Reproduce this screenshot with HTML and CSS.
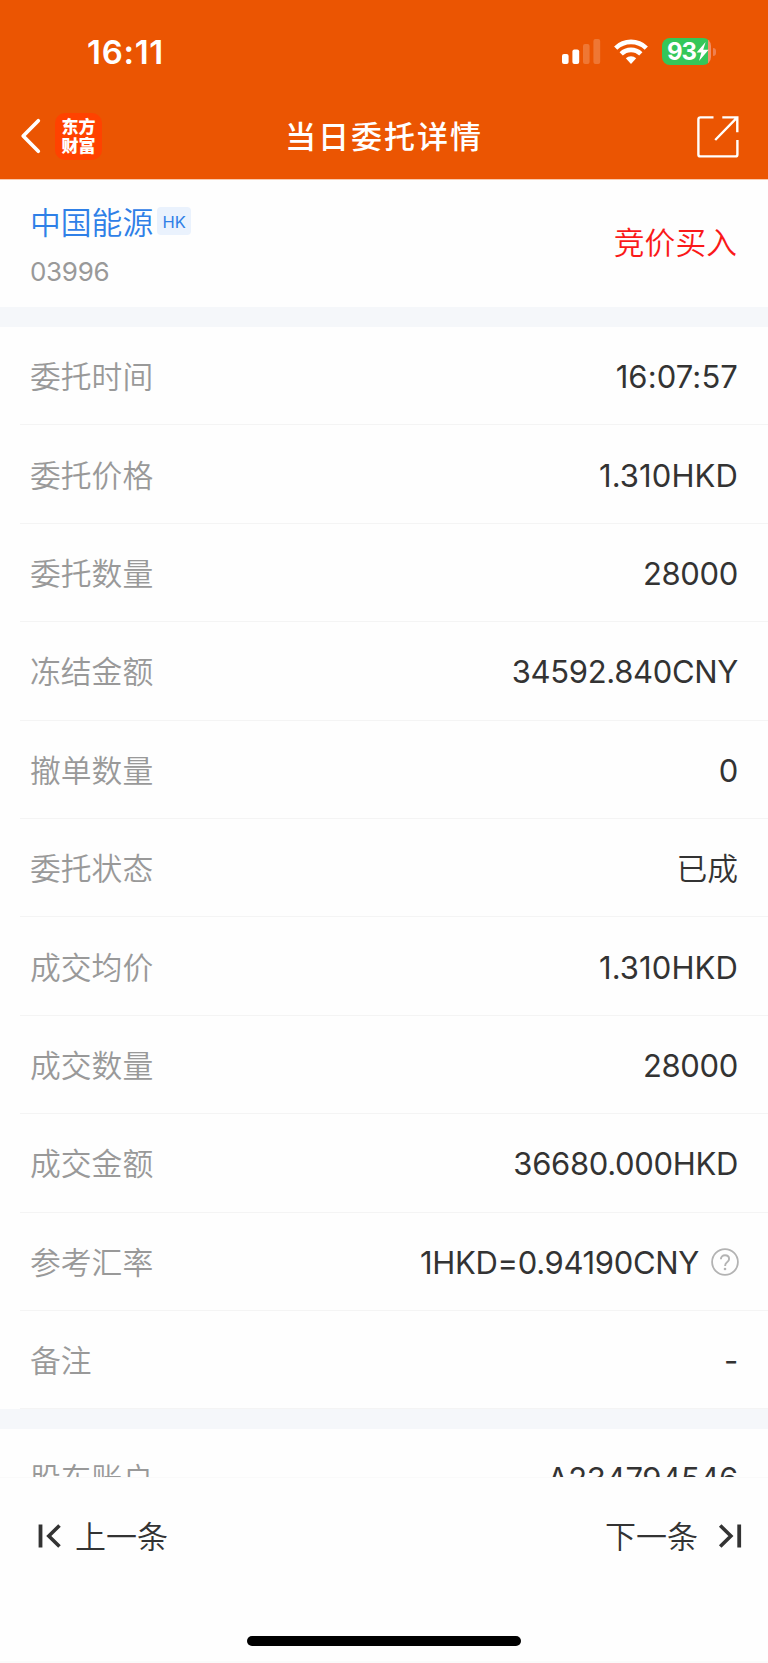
FILE: index.html
```html
<!DOCTYPE html>
<html lang="zh-CN">
<head>
<meta charset="utf-8">
<title>当日委托详情</title>
<link rel="stylesheet" href="styles.css">
</head>
<body>
<div class="screen">
  <header class="header">
    <div class="status">
      <span class="clock">16:11</span>
      <div class="indicators">
        <svg class="signal" width="40" height="26" viewBox="0 0 40 26" fill="#fff">
          <rect x="1" y="15" width="6.6" height="10" rx="2"/>
          <rect x="11.4" y="10.4" width="6.8" height="14.6" rx="2"/>
          <rect x="22" y="5" width="6.6" height="20" rx="2" opacity=".2"/>
          <rect x="32.4" y="0" width="6.8" height="25" rx="2" opacity=".2"/>
        </svg>
        <svg class="wifi" width="34" height="26" viewBox="0 0 34 26">
          <g fill="none" stroke="#fff" stroke-width="4.6">
            <path d="M1.7 9.1a22 22 0 0 1 30.6 0"/>
            <path d="M7.2 14.9a14 14 0 0 1 19.6 0"/>
          </g>
          <path d="M11.8 19.3a7.6 7.6 0 0 1 10.4 0L17 25z" fill="#fff"/>
        </svg>
        <div class="battery">
          <span class="battery-level">93</span>
          <svg class="bolt" width="13" height="19" viewBox="0 0 13 19"><path d="M9.6 0 .6 10.6h4.8L3 19l9.6-11.2H7.2z" fill="#fff"/></svg>
        </div>
        <span class="battery-tip"></span>
      </div>
    </div>
    <nav class="nav">
      <div class="nav-left">
        <svg width="22" height="36" viewBox="0 0 22 36"><path d="M19.3 2.8 4.2 18l15.1 15.2" fill="none" stroke="#fff" stroke-width="3.7" stroke-linecap="round" stroke-linejoin="round"/></svg>
        <div class="logo"><span>东方</span><span>财富</span></div>
      </div>
      <h1 class="title">当日委托详情</h1>
      <svg class="share" width="42" height="42" viewBox="0 0 42 42" fill="none" stroke="#fff" stroke-width="2.4">
        <path d="M16.5 1.4H3.4Q1.4 1.4 1.4 3.4V38.4Q1.4 40.4 3.4 40.4H38.4Q40.4 40.4 40.4 38.4V24M25.3 1.4H40.3V16.2M40 1.7 18.2 24"/>
      </svg>
    </nav>
  </header>

  <main class="content">
    <section class="stock">
      <div>
        <div class="stock-name">中国能源<span class="tag">HK</span></div>
        <div class="code">03996</div>
      </div>
      <span class="side">竞价买入</span>
    </section>
    <section class="rows">
      <div class="row"><span class="label">委托时间</span><span class="value loose">16:07:57</span></div>
      <div class="row"><span class="label">委托价格</span><span class="value loose">1.310HKD</span></div>
      <div class="row"><span class="label">委托数量</span><span class="value">28000</span></div>
      <div class="row"><span class="label">冻结金额</span><span class="value">34592.840CNY</span></div>
      <div class="row"><span class="label">撤单数量</span><span class="value">0</span></div>
      <div class="row"><span class="label">委托状态</span><span class="value zh">已成</span></div>
      <div class="row"><span class="label">成交均价</span><span class="value loose">1.310HKD</span></div>
      <div class="row"><span class="label">成交数量</span><span class="value">28000</span></div>
      <div class="row"><span class="label">成交金额</span><span class="value">36680.000HKD</span></div>
      <div class="row"><span class="label">参考汇率</span><span class="value">1HKD=0.94190CNY</span>
        <svg class="help" width="28" height="28" viewBox="0 0 28 28" fill="none" stroke="#b3b3b3"><circle cx="14" cy="14" r="12.9" stroke-width="1.8"/><path d="M9.9 11.3c0-2.5 1.7-4 4.1-4s4.1 1.5 4.1 3.7c0 1.7-1 2.5-2.1 3.3-1.3.9-1.9 1.6-1.9 3.6" stroke-width="1.9"/><circle cx="14" cy="21" r="1.3" fill="#b3b3b3" stroke="none"/></svg>
      </div>
      <div class="row"><span class="label">备注</span><span class="value">-</span></div>
    </section>
    <section class="rows">
      <div class="row"><span class="label">股东账户</span><span class="value">A234794546</span></div>
    </section>
  </main>

  <footer class="footer">
    <div class="pager">
      <div class="pager-link">
        <svg width="24" height="24" viewBox="0 0 24 24" fill="none" stroke="#333"><path d="M2.5.5v23" stroke-width="3.8"/><path d="M21.5 1.5 10.8 12l10.7 10.5" stroke-width="3.6"/></svg>
        <span class="pager-text">上一条</span>
      </div>
      <div class="pager-link next">
        <span class="pager-text">下一条</span>
        <svg width="24" height="24" viewBox="0 0 24 24" fill="none" stroke="#333"><path d="M21.2.5v23" stroke-width="3.8"/><path d="M2.2 1.5 12.9 12 2.2 22.5" stroke-width="3.6"/></svg>
      </div>
    </div>
    <div class="home-bar"></div>
  </footer>
</div>
</body>
</html>
```

FILE: styles.css
```css
* { box-sizing: border-box; }
body { margin: 0; background: #fff; font-family: Inter, "Noto Sans CJK SC", sans-serif; color: #333; }
svg { display: block; flex: none; }
.screen { width: 768px; height: 1663px; display: flex; flex-direction: column; overflow: hidden; background: #fefefe; }

.header { flex: none; height: 180px; background: #eb5502; color: #fff; border-bottom: 1px solid #f9c9ad; }
.status { height: 96px; padding: 7px 52px 0 87px; display: flex; align-items: center; justify-content: space-between; }
.clock { font-size: 33px; font-weight: 600; line-height: 40px; letter-spacing: 0.7px; }
.indicators { display: flex; align-items: center; }
.wifi { margin-left: 13px; }
.battery { margin-left: 14px; width: 49px; height: 27px; border-radius: 8px; display: flex; align-items: center; padding-left: 5px; background: linear-gradient(90deg, #34c759 46px, #f19067 46px); }
.battery-level { font-size: 24px; font-weight: 700; line-height: 27px; letter-spacing: -1px; }
.battery-tip { width: 3px; height: 8px; margin-left: 2px; border-radius: 0 3px 3px 0; background: #ef8050; }
.nav { height: 80px; padding: 0 29px 0 19px; display: grid; grid-template-columns: 1fr auto 1fr; align-items: center; }
.nav-left { display: flex; align-items: center; gap: 14px; }
.logo { width: 47px; height: 47px; border-radius: 10px; background: #ff4200; display: flex; flex-direction: column; align-items: center; justify-content: center; padding-bottom: 2px; font: 900 17px/19px "Noto Sans CJK SC", sans-serif; }
.title { margin: 0 0 2px; padding-left: 10px; font: 500 31px/44px "Noto Sans CJK SC", sans-serif; letter-spacing: 2px; }
.share { justify-self: end; margin-top: 2px; }

.content { flex: none; height: 1297px; overflow: hidden; }
.stock { height: 127px; padding: 19px 31px 0 30px; display: flex; justify-content: space-between; }
.stock-name { display: flex; align-items: flex-start; font: 350 30.8px/44px "Noto Sans CJK SC", sans-serif; color: #2f80e7; }
.tag { width: 34px; height: 28px; margin: 8px 0 0 4px; border-radius: 4px; background: #eaf2fd; font: 400 16.5px/30px Inter, sans-serif; text-align: center; }
.code { margin-top: 12px; font-size: 26px; line-height: 34px; letter-spacing: -0.3px; color: #999; }
.side { margin-top: 20px; font: 350 30.8px/44px "Noto Sans CJK SC", sans-serif; color: #fa1919; }
.rows { border-top: 20px solid #f5f7fa; }
.row { height: 98.4px; margin-left: 20px; padding: 0 30px 0 10px; display: flex; align-items: center; border-bottom: 1px solid #f4f4f4; }
.label { flex: 1; padding-bottom: 1px; font: 350 30.8px/44px "Noto Sans CJK SC", sans-serif; color: #999; }
.value { padding-top: 3px; font-size: 31px; line-height: 44px; letter-spacing: -0.33px; }
.value.loose { letter-spacing: 0.1px; }
.value.zh { padding: 0 0 1px; font: 350 30.8px/44px "Noto Sans CJK SC", sans-serif; letter-spacing: 0; }
.help { margin-left: 12px; margin-right: -1px; margin-top: 1px; }

.footer { flex: 1; background: #fefefe; border-top: 1px solid #fafafa; border-bottom: 2px solid #fafafa; display: flex; flex-direction: column; align-items: center; }
.pager { width: 100%; height: 117px; padding: 0 26px 2px 38px; display: flex; align-items: center; justify-content: space-between; }
.pager-link { display: flex; align-items: center; gap: 13px; }
.pager-text { padding-bottom: 2px; font: 350 31px/44px "Noto Sans CJK SC", sans-serif; }
.pager-link.next { gap: 20px; }
.home-bar { margin-top: 41px; width: 274px; height: 10px; border-radius: 5px; background: #000; }
```
